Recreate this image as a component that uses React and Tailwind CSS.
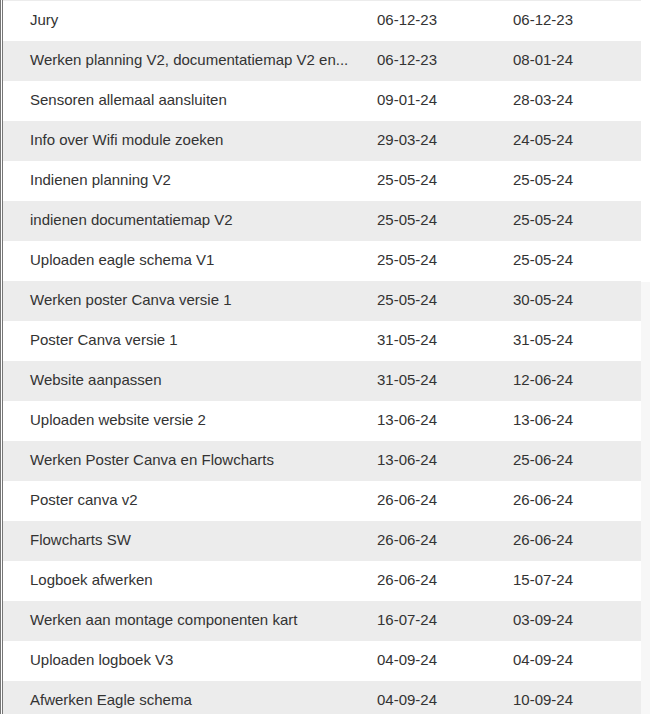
import React from 'react';

const tasks = [
  ['Jury', '06-12-23', '06-12-23'],
  ['Werken planning V2, documentatiemap V2 en...', '06-12-23', '08-01-24'],
  ['Sensoren allemaal aansluiten', '09-01-24', '28-03-24'],
  ['Info over Wifi module zoeken', '29-03-24', '24-05-24'],
  ['Indienen planning V2', '25-05-24', '25-05-24'],
  ['indienen documentatiemap V2', '25-05-24', '25-05-24'],
  ['Uploaden eagle schema V1', '25-05-24', '25-05-24'],
  ['Werken poster Canva versie 1', '25-05-24', '30-05-24'],
  ['Poster Canva versie 1', '31-05-24', '31-05-24'],
  ['Website aanpassen', '31-05-24', '12-06-24'],
  ['Uploaden website versie 2', '13-06-24', '13-06-24'],
  ['Werken Poster Canva en Flowcharts', '13-06-24', '25-06-24'],
  ['Poster canva v2', '26-06-24', '26-06-24'],
  ['Flowcharts SW', '26-06-24', '26-06-24'],
  ['Logboek afwerken', '26-06-24', '15-07-24'],
  ['Werken aan montage componenten kart', '16-07-24', '03-09-24'],
  ['Uploaden logboek V3', '04-09-24', '04-09-24'],
  ['Afwerken Eagle schema', '04-09-24', '10-09-24'],
];

export default function App() {
  return (
    <div className="flex h-[714px] w-[650px] overflow-hidden bg-white font-['Liberation_Sans',Arial,sans-serif] text-[15px] text-[#333]">
      <div className="w-[641px] shrink-0 border-l-[3px] border-double border-[#777]">
        <div className="h-px bg-[#ececec]" />
        {tasks.map(([name, start, end], i) => (
          <div
            key={name}
            className={`grid h-10 grid-cols-[347px_136px_1fr] items-center pb-[2px] ${i % 2 ? 'bg-[#ececec]' : 'bg-white'}`}
          >
            <div className="overflow-hidden whitespace-nowrap pl-[27px]">{name}</div>
            <div className="pl-[27px]">{start}</div>
            <div className="pl-[27px]">{end}</div>
          </div>
        ))}
      </div>
      <div className="mt-[282px] flex-1 bg-[#f7f7f7]" />
    </div>
  );
}
